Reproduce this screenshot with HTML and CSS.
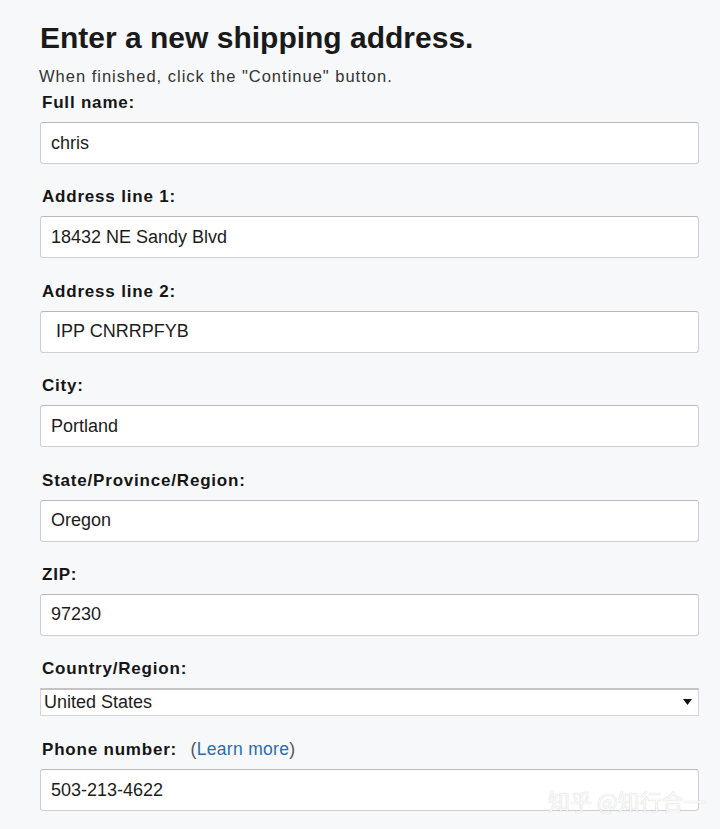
FILE: index.html
```html
<!DOCTYPE html>
<html lang="en">
<head>
<meta charset="utf-8">
<title>Enter a new shipping address</title>
<link rel="stylesheet" href="styles.css">
</head>
<body>
<main class="page">
  <h1 class="title">Enter a new shipping address.</h1>
  <p class="subtitle">When finished, click the "Continue" button.</p>
  <form class="form">
    <div class="field first">
      <div class="label">Full name:</div>
      <div class="input">chris</div>
    </div>
    <div class="field">
      <div class="label">Address line 1:</div>
      <div class="input">18432 NE Sandy Blvd</div>
    </div>
    <div class="field">
      <div class="label">Address line 2:</div>
      <div class="input indent">IPP CNRRPFYB</div>
    </div>
    <div class="field">
      <div class="label">City:</div>
      <div class="input">Portland</div>
    </div>
    <div class="field">
      <div class="label">State/Province/Region:</div>
      <div class="input">Oregon</div>
    </div>
    <div class="field">
      <div class="label">ZIP:</div>
      <div class="input">97230</div>
    </div>
    <div class="field">
      <div class="label">Country/Region:</div>
      <div class="select">
        <span>United States</span>
        <svg class="caret" width="9" height="6" viewBox="0 0 9 6"><path d="M0 0H9L4.5 6Z" fill="#111"/></svg>
      </div>
    </div>
    <div class="field">
      <div class="label">Phone number: <span class="more">(<span class="link">Learn more</span>)</span></div>
      <div class="input">503-213-4622</div>
    </div>
  </form>
  <div class="watermark">知乎 @知行合一</div>
</main>
</body>
</html>
```

FILE: styles.css
```css
html, body {
  margin: 0;
  padding: 0;
}
body {
  background: #f7f8fa;
  font-family: "Liberation Sans", Arial, sans-serif;
  color: #151515;
}
.page {
  position: relative;
  width: 720px;
  height: 829px;
  box-sizing: border-box;
  padding: 21px 21px 0 40px;
  overflow: hidden;
}
.title {
  margin: 0;
  font-size: 30px;
  line-height: 34px;
  font-weight: bold;
  color: #1a1a1a;
}
.subtitle {
  margin: 12px 0 0 -1px;
  font-size: 16.5px;
  line-height: 18px;
  letter-spacing: 1px;
  color: #333;
}
.form {
  display: flex;
  flex-direction: column;
}
.field {
  display: flex;
  flex-direction: column;
  margin-top: 23.4px;
}
.field.first {
  margin-top: 8px;
}
.label {
  margin-left: 2px;
  font-size: 17px;
  line-height: 20px;
  font-weight: bold;
  letter-spacing: 0.8px;
  color: #161616;
}
.more {
  margin-left: 8px;
  font-weight: normal;
  font-size: 17.5px;
  letter-spacing: 0.3px;
  color: #555;
}
.link {
  color: #2b6cae;
}
.input {
  margin-top: 9px;
  height: 42px;
  box-sizing: border-box;
  background: #fff;
  border: 1px solid #cfcfcf;
  border-top-color: #b9b9b9;
  border-radius: 3px;
  padding-left: 10px;
  display: flex;
  align-items: center;
  font-size: 18px;
  color: #1c1c1c;
}
.input.indent {
  padding-left: 15px;
}
.select {
  margin-top: 8.6px;
  height: 28px;
  box-sizing: border-box;
  background: #fff;
  border: 1px solid #d4d4d4;
  border-top: 2px solid #c4c4c4;
  display: flex;
  align-items: center;
  justify-content: space-between;
  padding: 0 6px 0 3px;
  font-size: 18px;
  color: #1c1c1c;
}
.caret {
  display: block;
}
.watermark {
  position: absolute;
  left: 548px;
  top: 787px;
  font-family: "Noto Sans CJK SC", sans-serif;
  font-size: 22px;
  line-height: 26px;
  color: rgba(255, 255, 255, 0.9);
  text-shadow: 0 0 1px rgba(120, 120, 120, 0.45);
}
```
